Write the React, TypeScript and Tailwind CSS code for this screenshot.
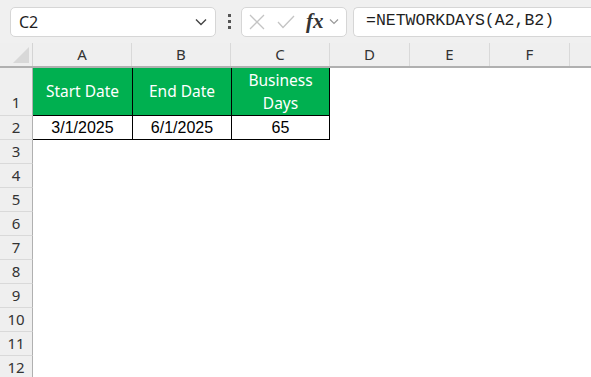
import React from "react";

const cols = [
  { name: "A", w: 99 },
  { name: "B", w: 99 },
  { name: "C", w: 99 },
  { name: "D", w: 80 },
  { name: "E", w: 80 },
  { name: "F", w: 80 },
  { name: "", w: 80 },
];

const font = { fontFamily: '"Segoe UI", "Noto Sans", sans-serif' };

const Toolbar: React.FC = () => (
  <div className="flex h-[43px] items-center bg-[#f0f0f0] pl-[10px]">
    <div className="flex h-[30px] w-[206px] items-center justify-between rounded-[5px] border border-[#d6d6d6] bg-white pl-[8px] pr-[8px]">
      <span className="text-[16px] text-[#1f1f1f]">C2</span>
      <svg width="12" height="8" viewBox="0 0 12 8">
        <path d="M1 1.5 L6 6.5 L11 1.5" fill="none" stroke="#444" strokeWidth="1.4" />
      </svg>
    </div>
    <div className="ml-[10px] flex w-[6px] flex-col items-center gap-[3px]">
      <span className="h-[3px] w-[3px] bg-[#555]" />
      <span className="h-[3px] w-[3px] bg-[#555]" />
      <span className="h-[3px] w-[3px] bg-[#555]" />
    </div>
    <div className="ml-[9px] flex h-[30px] w-[106px] items-center rounded-[5px] border border-[#d6d6d6] bg-white pl-[7px]">
      <svg width="16" height="16" viewBox="0 0 16 16">
        <path d="M1 1 L15 15 M15 1 L1 15" stroke="#c4c4c4" strokeWidth="1.3" />
      </svg>
      <svg className="ml-[12px]" width="18" height="14" viewBox="0 0 18 14">
        <path d="M1 7 L6 12.5 L17 1" fill="none" stroke="#c4c4c4" strokeWidth="1.3" />
      </svg>
      <span
        className="ml-[11px] text-[21px] font-bold italic leading-none text-[#333]"
        style={{ fontFamily: '"Liberation Serif", serif' }}
      >
        fx
      </span>
      <svg className="ml-[5px]" width="10" height="7" viewBox="0 0 10 7">
        <path d="M1 1.5 L5 5.5 L9 1.5" fill="none" stroke="#999" strokeWidth="1.2" />
      </svg>
    </div>
    <div className="ml-[6px] flex h-[30px] flex-1 items-center rounded-l-[5px] border border-r-0 border-[#d6d6d6] bg-white pl-[12px]">
      <span
        className="text-[16.5px] text-[#1f1f1f]"
        style={{ fontFamily: '"Liberation Mono", monospace' }}
      >
        =NETWORKDAYS(A2,B2)
      </span>
    </div>
  </div>
);

const ColumnHeaders: React.FC = () => (
  <div className="flex h-[25px] border-b-[2px] border-[#b0b0b0] bg-[#efefef]">
    <div className="relative w-[33px] shrink-0 border-r border-[#d4d4d4]">
      <div className="absolute bottom-[3px] right-[3px] h-0 w-0 border-b-[16px] border-l-[16px] border-b-[#d8d8d8] border-l-transparent" />
    </div>
    {cols.map((c, i) => (
      <div
        key={i}
        style={{ width: c.w }}
        className="flex shrink-0 items-center justify-center border-r border-[#d9d9d9] text-[15px] text-[#333]"
      >
        {c.name}
      </div>
    ))}
  </div>
);

const RowHeader: React.FC<{ n: number; h: number; align?: string }> = ({ n, h, align = "items-center" }) => (
  <div
    style={{ height: h }}
    className={`flex w-[33px] shrink-0 justify-center border-b border-r border-b-[#d9d9d9] border-r-[#b0b0b0] bg-[#efefef] text-[15px] text-[#333] ${align}`}
  >
    {n}
  </div>
);

const App: React.FC = () => {
  const empties = [3, 4, 5, 6, 7, 8, 9, 10, 11, 12];
  return (
    <div className="h-[377px] w-[591px] overflow-hidden bg-white" style={font}>
      <Toolbar />
      <ColumnHeaders />
      {/* row 1 */}
      <div className="flex">
        <RowHeader n={1} h={48} align="items-end pb-[2px]" />
        <div className="flex h-[48px] border-b border-black">
          {["Start Date", "End Date", "Business Days"].map((t, i) => (
            <div
              key={t}
              className={`flex w-[99px] shrink-0 items-center justify-center bg-[#00b050] px-[10px] text-center text-[15.5px] leading-[23px] text-white ${i > 0 ? "border-l border-black" : ""} ${i === 2 ? "border-r border-black" : ""}`}
            >
              {t}
            </div>
          ))}
        </div>
      </div>
      {/* row 2 */}
      <div className="flex">
        <RowHeader n={2} h={24} />
        <div className="flex h-[24px] border-b border-black">
          {["3/1/2025", "6/1/2025", "65"].map((t, i) => (
            <div
              key={t}
              className={`flex w-[99px] shrink-0 items-center justify-center text-[16px] text-black ${i > 0 ? "border-l border-black" : ""} ${i === 2 ? "border-r border-black" : ""}`}
              style={{ fontFamily: '"Liberation Sans", sans-serif' }}
            >
              {t}
            </div>
          ))}
        </div>
      </div>
      {empties.map((n) => (
        <div key={n} className="flex">
          <RowHeader n={n} h={24} />
        </div>
      ))}
    </div>
  );
};

export default App;
